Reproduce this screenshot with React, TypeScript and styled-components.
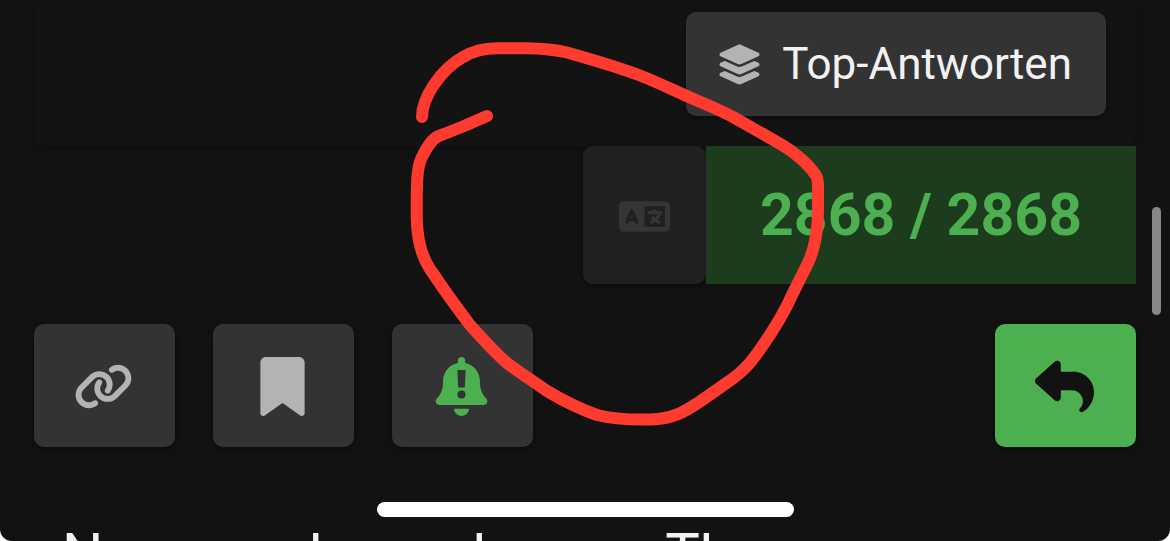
import React from 'react';
import styled, { createGlobalStyle } from 'styled-components';
import { FaBookmark, FaLanguage, FaLayerGroup, FaLink, FaReply } from 'react-icons/fa6';

const GlobalStyle = createGlobalStyle`
  *, *::before, *::after { box-sizing: border-box; }
  body {
    margin: 0;
    background: #fff;
    color: #f1f1f1;
    font-family: Roboto, "Liberation Sans", sans-serif;
  }
`;

const Page = styled.main`
  position: relative;
  display: flex;
  flex-direction: column;
  height: 100vh;
  padding: 0 34px;
  overflow: hidden;
  background: #121212;
  border-radius: 0 0 12px 12px;
`;

const PostMap = styled.section`
  display: flex;
  justify-content: flex-end;
  flex-shrink: 0;
  padding: 12px 30px 30px;
  border-radius: 0 0 12px 12px;
  background: #131313;
  box-shadow: 0 3px 10px rgba(0, 0, 0, 0.15);
`;

const Button = styled.button`
  display: flex;
  align-items: center;
  justify-content: center;
  margin: 0;
  padding: 2px 0 0;
  border: 0;
  border-radius: 10px;
  background: #333;
  color: #b3b3b3;
  font: inherit;
  box-shadow: 0 2px 6px rgba(0, 0, 0, 0.4);
  cursor: pointer;
`;

const TopRepliesButton = styled(Button)`
  gap: 20px;
  height: 104px;
  padding: 1px 34px 0 31px;

  span {
    color: #f1f1f1;
    font-size: 44px;
    line-height: 53px;
  }
`;

const ProgressRow = styled.div`
  display: flex;
  justify-content: flex-end;
  flex-shrink: 0;
  height: 138px;
`;

const TranslateButton = styled(Button)`
  width: 123px;
  background: #202020;
  color: #353535;
  cursor: default;
`;

const Progress = styled.div`
  display: flex;
  align-items: center;
  justify-content: center;
  width: 430px;
  background: #1d3b1d;
  color: #4caf50;
  font-size: 59px;
  font-weight: 700;
  line-height: 68px;
`;

const Actions = styled.div`
  display: flex;
  flex-shrink: 0;
  gap: 38px;
  margin-top: 40px;
`;

const ActionButton = styled(Button)<{ $primary?: boolean; $active?: boolean }>`
  width: 141px;
  height: 123px;
  padding-right: 2px;
  background: ${({ $primary }) => ($primary ? '#4caf50' : '#333')};
  color: ${({ $primary, $active }) => ($primary ? '#121212' : $active ? '#4caf50' : '#b3b3b3')};
  margin-left: ${({ $primary }) => ($primary ? 'auto' : '0')};
`;

const HomeIndicator = styled.div`
  flex-shrink: 0;
  align-self: center;
  width: 417px;
  height: 15px;
  margin-top: 55px;
  border-radius: 8px;
  background: #fff;
`;

const Heading = styled.h2`
  flex-shrink: 0;
  margin: 16px 0 0;
  padding-left: 28px;
  overflow: hidden;
  font-size: 58px;
  font-weight: 400;
  line-height: 42px;
  white-space: nowrap;
`;

const ScrollThumb = styled.div`
  position: absolute;
  top: 207px;
  right: 9px;
  width: 9px;
  height: 108px;
  border-radius: 5px;
  background: #888;
`;

const Annotation = styled.svg`
  position: absolute;
  inset: 0;
  width: 100%;
  height: 100%;
  pointer-events: none;
`;

const WatchingIcon = () => (
  <svg viewBox="0 0 448 512" width="59" height="59" fill="currentColor" aria-hidden="true">
    <path
      fillRule="evenodd"
      d="M224 0c-17.700 0-32 14.300-32 32v19.200C119 66 64 130.600 64 208v18.800c0 47-17.300 92.400-48.500 127.600l-7.400 8.300c-8.400 9.400-10.400 22.900-5.300 34.400S19.400 416 32 416h384c12.600 0 24-7.400 29.200-18.900s3.100-25-5.300-34.400l-7.400-8.300C401.300 319.200 384 273.900 384 226.800V208c0-77.400-55-142-128-156.800V32c0-17.700-14.300-32-32-32zM195 113h58a7 7 0 0 1 7 8l-7 137a7 7 0 0 1-7 7h-44a7 7 0 0 1-7-7l-7-137a7 7 0 0 1 7-8zM224 291a35 35 0 1 1 0 70a35 35 0 1 1 0-70z"
    />
    <path d="M269.300 493.300c12-12 18.700-28.300 18.700-45.300H160c0 17 6.700 33.300 18.700 45.300S207 512 224 512s33.300-6.700 45.300-18.700z" />
  </svg>
);

const PenStroke = () => (
  <Annotation viewBox="0 0 1170 541" aria-hidden="true">
    <path
      d="M422 117C422 98 440 70 463 57C473 51 484 48.500 497 48.300L527 48.300C541 48.500 554 49.500 567 52.500C590 59 615 66 640 75.500C657 82 673 90 690 97.500C705 104 719 109.500 733 117L777 142C784 146 791 150.500 797 155.500C804 161 811 168 816 175.500C818 178.500 818 182 818 186V210C818 228 815 248 808 263L793 293C785 311 775 328 763 345C757 354 752 361 745 368C741 372 737 375.500 733 378.500C722 386 711 394 700 401.500C687 410 675 419 650 419.500C630 420 613 419 597 415C580 409 562 400 547 391C533 381 520 373 507 363C493 351 482 338 470 325C461 313 452 301 443 288L430 269C422 257 417 240 416.700 217V197C417 180 417 165 423 155C427 147 431 141 436 137.500C438 136 441 135 444 134L463 126.500L487 116"
      fill="none"
      stroke="#ff3b30"
      strokeWidth="12"
      strokeLinecap="round"
      strokeLinejoin="round"
    />
  </Annotation>
);

export default function App() {
  return (
    <>
      <GlobalStyle />
      <Page>
        <PostMap>
          <TopRepliesButton type="button">
            <FaLayerGroup size={45} aria-hidden="true" />
            <span>Top-Antworten</span>
          </TopRepliesButton>
        </PostMap>
        <ProgressRow>
          <TranslateButton type="button" aria-label="Übersetzen" disabled>
            <FaLanguage size={51} aria-hidden="true" />
          </TranslateButton>
          <Progress>2868 / 2868</Progress>
        </ProgressRow>
        <Actions>
          <ActionButton type="button" aria-label="Link teilen">
            <FaLink size={59} aria-hidden="true" />
          </ActionButton>
          <ActionButton type="button" aria-label="Lesezeichen">
            <FaBookmark size={59} aria-hidden="true" />
          </ActionButton>
          <ActionButton type="button" aria-label="Beobachten" $active>
            <WatchingIcon />
          </ActionButton>
          <ActionButton type="button" aria-label="Antworten" $primary>
            <FaReply size={59} aria-hidden="true" />
          </ActionButton>
        </Actions>
        <HomeIndicator />
        <Heading>Never and even leaves. The</Heading>
        <ScrollThumb />
        <PenStroke />
      </Page>
    </>
  );
}
